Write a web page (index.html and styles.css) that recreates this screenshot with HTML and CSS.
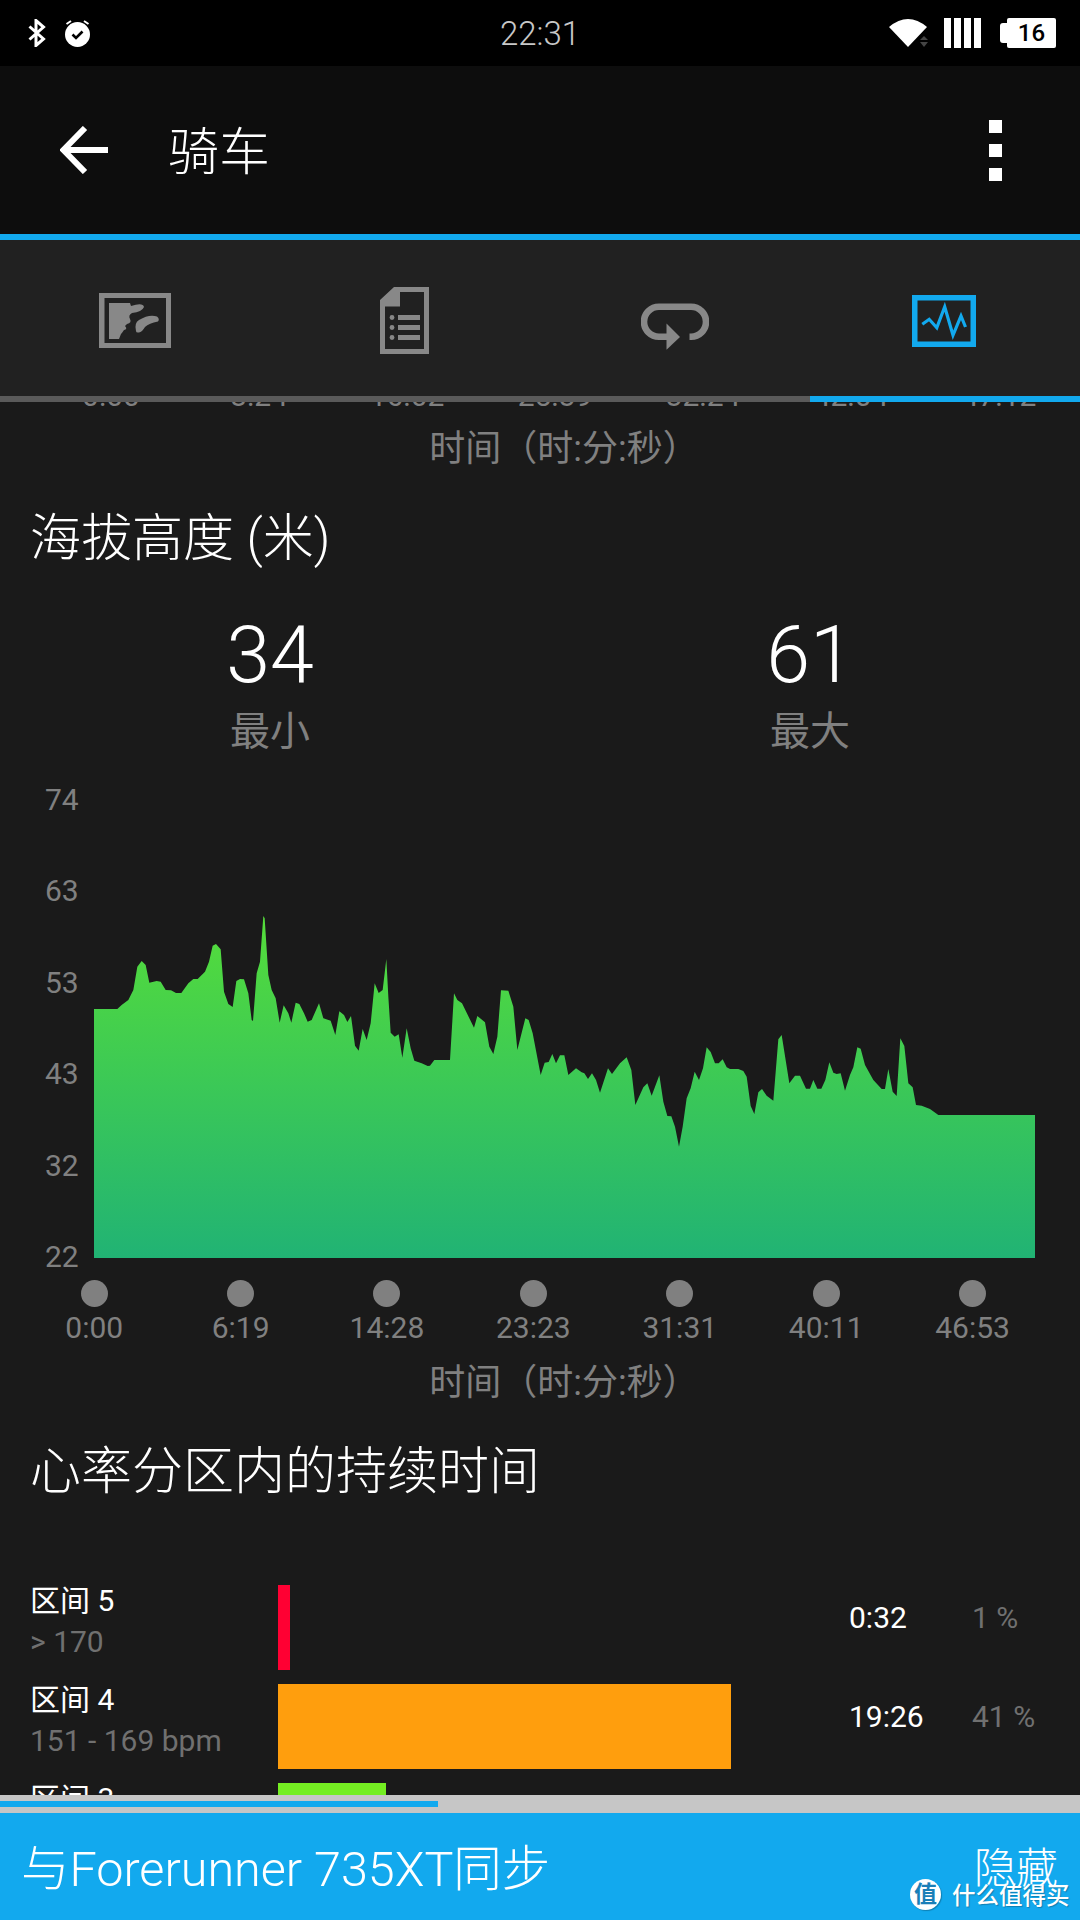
FILE: index.html
```html
<!DOCTYPE html>
<html lang="zh-CN">
<head>
	<meta charset="UTF-8">
	<title>骑车</title>
	<link rel="stylesheet" href="styles.css">
</head>
<body>
	<div id="page">
		<div class="status">
			<div class="status-left">
				<svg class="ico-bt" viewBox="0 0 18 28"><path d="M1.5 7.5 L15.5 20 L8 26.5 V1.5 L15.5 8 L1.5 20.5"/></svg>
				<svg class="ico-alarm" viewBox="0 0 25 28">
					<circle cx="12.5" cy="15.5" r="12.5"/>
					<path class="bell" d="M1.5 5 L6 2 M23.5 5 L19 2"/>
					<path class="tick" d="M7.5 15.5 L11 19 L17.5 12.5"/>
				</svg>
			</div>
			<div class="status-time">22:31</div>
			<div class="status-right">
				<svg class="ico-wifi" viewBox="0 0 40 28">
					<path d="M0 8 Q19 -8 38 8 L19 28 Z"/>
					<path class="updown" d="M35 17 L39 21 H31 Z M31 23 H39 L35 28 Z"/>
				</svg>
				<div class="signal"><span></span><span></span><span></span><span></span></div>
				<div class="battery"><div class="nub"></div><div class="cell">16</div></div>
			</div>
		</div>

		<div class="appbar">
			<svg class="ico-back" viewBox="0 0 48 48"><path d="M48 24 H4 M25 2 L3.5 24 L25 46"/></svg>
			<div class="title">骑车</div>
			<div class="menu"><span></span><span></span><span></span></div>
		</div>

		<div class="tabs">
			<div class="tab">
				<svg class="ico-map" viewBox="0 0 72 55">
					<path fill-rule="evenodd" d="M0 0 H72 V55 H0 Z M5.5 5 V50 H67 V5 Z"/>
					<path d="M10 10 H31 L32 13 Q44 9 45 14 Q43 19 33 20 Q29 22 31 26 Q33 30 28 31 L26 33 Q29 36 25 37 Q23 40 22 41 L20 46 H10 Z"/>
					<path d="M37 38 Q35 30 40 27 Q50 21 58 23.5 Q61 26 59 28.5 Q50 30 46 34 Q43 39 40 39.5 Q37 40 37 38 Z"/>
				</svg>
			</div>
			<div class="tab">
				<svg class="ico-doc" viewBox="0 0 49 67">
					<path fill-rule="evenodd" d="M14 0 H49 V67 H0 V13 Z M20 5 V19.5 H5 V62 H44 V5 Z"/>
					<circle cx="12" cy="30.5" r="2.4"/><circle cx="12" cy="40.5" r="2.4"/><circle cx="12" cy="50.5" r="2.4"/>
					<path d="M18 28 H40 V33 H18 Z M18 38 H40 V43 H18 Z M18 48 H40 V53 H18 Z"/>
				</svg>
			</div>
			<div class="tab">
				<svg class="ico-loop" viewBox="0 -11.5 67.5 58">
					<path class="line" d="M48.5 33.3 H50 A15 15 0 0 0 50 3.3 H18 A15 15 0 0 0 18 33.3 H28"/>
					<path d="M25.5 20 L39 33.5 L25.5 46.3 Z"/>
				</svg>
			</div>
			<div class="tab">
				<svg class="ico-activity" viewBox="0 0 64 52">
					<path class="frame" d="M2.75 2.75 H61.25 V49.25 H2.75 Z"/>
					<path class="pulse" d="M10.3 29.3 L17.2 24.3 L24.8 32.7 L32.7 11.7 L41 40.3 L49 21 L53.5 32"/>
				</svg>
			</div>
		</div>
		<div class="tab-line"><div class="tab-on"></div></div>

		<div class="content">
			<div class="cut-axis">
				<span>0:00</span><span>8:24</span><span>16:02</span><span>25:39</span><span>32:24</span><span>42:04</span><span>47:12</span>
			</div>
			<div class="caption cap-top">时间（时:分:秒）</div>
			<h2 class="heading head-alt">海拔高度 (米)</h2>

			<div class="stats">
				<div class="stat"><div class="stat-val">34</div><div class="stat-lbl">最小</div></div>
				<div class="stat"><div class="stat-val">61</div><div class="stat-lbl">最大</div></div>
			</div>

			<div class="chart">
				<div class="y-axis">
					<span>74</span><span>63</span><span>53</span><span>43</span><span>32</span><span>22</span>
				</div>
				<svg class="plot" viewBox="102 0 2823 1134">
					<defs>
						<linearGradient id="alt" gradientUnits="userSpaceOnUse" x1="0" y1="108" x2="0" y2="1134">
							<stop offset="0" stop-color="#55dd3a"/>
							<stop offset="1" stop-color="#21b374"/>
						</linearGradient>
					</defs>
					<polygon fill="url(#alt)" points="102,387 172,387 185,375 205,360 220,330 232,260 245,243 257,255 268,308 290,303 302,305 317,330 333,331 348,339 364,339 385,310 400,297 413,297 435,275 447,245 458,197 468,192 482,208 492,335 505,372 518,381 529,303 540,297 552,298 565,340 575,420 579,423 590,280 600,245 610,108 614,115 625,285 635,330 647,355 659,428 671,376 685,400 694,428 707,368 718,372 732,400 743,425 755,420 777,370 790,415 812,422 826,465 838,394 852,405 862,426 873,408 885,497 896,512 908,447 920,480 932,430 944,310 956,339 968,330 979,237 985,350 992,458 1004,470 1016,463 1027,533 1040,445 1052,505 1063,542 1085,550 1103,558 1110,557 1123,540 1170,540 1182,340 1192,360 1206,370 1242,443 1252,408 1275,427 1288,500 1300,522 1312,470 1323,331 1345,332 1360,380 1372,510 1396,415 1406,420 1418,460 1442,585 1454,548 1466,546 1477,522 1488,550 1500,526 1513,526 1525,585 1548,565 1565,577 1573,580 1584,597 1596,580 1608,600 1620,638 1644,565 1656,582 1680,550 1700,532 1714,570 1726,675 1750,622 1762,610 1775,647 1798,586 1810,665 1822,708 1834,709 1845,740 1857,800 1868,740 1880,655 1892,625 1904,575 1917,600 1929,565 1940,502 1952,516 1965,550 1976,550 1988,538 2000,562 2010,567 2035,567 2050,573 2060,590 2072,678 2083,702 2095,637 2106,627 2120,647 2140,662 2155,478 2165,465 2188,610 2205,587 2220,587 2238,626 2250,626 2260,600 2272,626 2284,626 2296,600 2308,547 2320,578 2330,582 2342,580 2355,632 2370,585 2380,562 2392,502 2402,506 2415,555 2440,600 2465,627 2475,627 2485,567 2498,635 2510,648 2521,475 2533,498 2545,610 2558,622 2568,675 2585,677 2610,687 2635,705 2925,705 2925,1134 102,1134"/>
				</svg>
			</div>

			<div class="x-axis">
				<div class="tick-col"><i></i><span>0:00</span></div>
				<div class="tick-col"><i></i><span>6:19</span></div>
				<div class="tick-col"><i></i><span>14:28</span></div>
				<div class="tick-col"><i></i><span>23:23</span></div>
				<div class="tick-col"><i></i><span>31:31</span></div>
				<div class="tick-col"><i></i><span>40:11</span></div>
				<div class="tick-col"><i></i><span>46:53</span></div>
			</div>
			<div class="caption cap-bottom">时间（时:分:秒）</div>
			<h2 class="heading head-hr">心率分区内的持续时间</h2>

			<div class="zones">
				<div class="zone">
					<div class="zone-name"><div>区间 5</div><div class="dim">&gt; 170</div></div>
					<div class="zone-track"><div class="bar bar-red"></div></div>
					<div class="zone-time">0:32</div>
					<div class="zone-pct">1 %</div>
				</div>
				<div class="zone">
					<div class="zone-name"><div>区间 4</div><div class="dim">151 - 169 bpm</div></div>
					<div class="zone-track"><div class="bar bar-orange"></div></div>
					<div class="zone-time">19:26</div>
					<div class="zone-pct">41 %</div>
				</div>
				<div class="zone">
					<div class="zone-name"><div>区间 3</div></div>
					<div class="zone-track"><div class="bar bar-green"></div></div>
				</div>
			</div>
		</div>

		<div class="sync-track"><div class="sync-fill"></div></div>
		<div class="sync">
			<div class="sync-text">与Forerunner 735XT同步</div>
			<div class="sync-hide">隐藏</div>
		</div>

		<div class="mark">
			<div class="mark-logo">值</div>
			<div class="mark-text">什么值得买</div>
		</div>
	</div>
</body>
</html>
```

FILE: styles.css
```css
* {
	margin: 0;
	padding: 0;
	box-sizing: border-box;
}
body {
	background: #1a1a1a;
	font-family: Roboto, "Noto Sans CJK SC", sans-serif;
}
#page {
	position: relative;
	width: 1080px;
	height: 1920px;
	display: flex;
	flex-direction: column;
	overflow: hidden;
	background: #1a1a1a;
}

/* status bar */
.status {
	height: 66px;
	flex: none;
	background: #000;
	display: grid;
	grid-template-columns: 1fr auto 1fr;
	align-items: center;
	padding: 0 24px;
}
.status-left {
	display: flex;
	gap: 19px;
	padding-left: 4px;
}
.ico-bt {
	width: 18px;
	height: 28px;
	fill: none;
	stroke: #fff;
	stroke-width: 3;
}
.ico-alarm {
	width: 25px;
	height: 28px;
	fill: #fff;
}
.ico-alarm .bell {
	fill: none;
	stroke: #fff;
	stroke-width: 2;
}
.ico-alarm .tick {
	fill: none;
	stroke: #000;
	stroke-width: 2.6;
}
.status-time {
	font-size: 33px;
	font-weight: 300;
	color: #c8c8c8;
}
.status-right {
	display: flex;
	justify-content: flex-end;
	align-items: center;
	gap: 15px;
}
.ico-wifi {
	width: 40px;
	height: 28px;
	fill: #fff;
}
.ico-wifi .updown {
	fill: #444;
}
.signal {
	display: flex;
	gap: 3px;
	height: 30px;
}
.signal span {
	width: 7px;
	background: #fff;
}
.battery {
	display: flex;
	align-items: center;
	margin-left: 4px;
}
.nub {
	width: 7px;
	height: 20px;
	background: #fff;
	border-radius: 3px 0 0 3px;
}
.cell {
	width: 49px;
	height: 30px;
	background: #fff;
	border-radius: 2px;
	color: #000;
	font-size: 24px;
	font-weight: 500;
	line-height: 30px;
	text-align: center;
}

/* app bar */
.appbar {
	height: 168px;
	flex: none;
	background: #0d0d0d;
	display: flex;
	align-items: center;
	padding: 0 78px 0 60px;
}
.ico-back {
	width: 48px;
	height: 48px;
	fill: none;
	stroke: #fff;
	stroke-width: 6;
}
.title {
	flex: 1;
	margin-left: 60px;
	margin-bottom: 4px;
	font-size: 51px;
	font-weight: 300;
	color: #fff;
}
.menu {
	display: flex;
	flex-direction: column;
	gap: 11px;
}
.menu span {
	width: 13px;
	height: 13px;
	background: #fff;
}

/* tabs */
.tabs {
	height: 162px;
	flex: none;
	border-top: 6px solid #12a9ee;
	background: #212121;
	display: grid;
	grid-template-columns: repeat(4, 1fr);
	padding-top: 5px;
}
.tab {
	display: flex;
	align-items: center;
	justify-content: center;
}
.tab svg {
	fill: #888;
}
.ico-map {
	width: 72px;
	height: 55px;
}
.ico-doc {
	width: 49px;
	height: 67px;
	margin-right: 2px;
}
.ico-loop {
	width: 67.5px;
	height: 58px;
}
.ico-loop .line {
	fill: none;
	stroke: #888;
	stroke-width: 6.6;
}
.ico-activity {
	width: 64px;
	height: 52px;
	margin-right: 2px;
}
.ico-activity .frame {
	fill: none;
	stroke: #12a9ee;
	stroke-width: 5.5;
}
.ico-activity .pulse {
	fill: none;
	stroke: #12a9ee;
	stroke-width: 3.2;
}
.tab-line {
	height: 6px;
	flex: none;
	background: #5a5a5a;
	display: flex;
	justify-content: flex-end;
}
.tab-on {
	width: 270px;
	background: #12a9ee;
}

/* scrolled content */
.content {
	flex: 1;
	overflow: hidden;
}
.cut-axis {
	height: 9px;
	padding-left: 37px;
	display: flex;
	align-items: flex-end;
	overflow: hidden;
}
.cut-axis span {
	width: 148px;
	flex: none;
	text-align: center;
	font-size: 30px;
	line-height: 30px;
	color: #808080;
}
.caption {
	text-align: center;
	font-size: 36px;
	line-height: 40px;
	color: #808080;
	padding-left: 48px;
}
.cap-top {
	margin-top: 18px;
}
.cap-bottom {
	margin-top: 17px;
}
.heading {
	padding-left: 30px;
	font-size: 51px;
	font-weight: 300;
	line-height: 60px;
	color: #fff;
}
.head-alt {
	margin-top: 40px;
}
.head-hr {
	margin-top: 39px;
}
.stats {
	margin-top: 46px;
	display: grid;
	grid-template-columns: 1fr 1fr;
	text-align: center;
}
.stat-val {
	font-size: 79px;
	font-weight: 300;
	line-height: 80px;
	color: #fff;
}
.stat-lbl {
	margin-top: 15px;
	font-size: 40px;
	line-height: 44px;
	color: #808080;
}
.chart {
	margin-top: 31px;
	height: 487px;
	display: flex;
	padding-right: 45px;
}
.y-axis {
	width: 94px;
	flex: none;
	padding-left: 45px;
	display: flex;
	flex-direction: column;
	justify-content: space-between;
	font-size: 30px;
	line-height: 30px;
	color: #808080;
}
.plot {
	width: 941px;
	height: 378px;
	align-self: flex-end;
	margin-bottom: 14px;
}
.x-axis {
	margin-top: 8px;
	padding-left: 21px;
	display: flex;
}
.tick-col {
	width: 146.4px;
	flex: none;
	display: flex;
	flex-direction: column;
	align-items: center;
	gap: 3px;
	font-size: 30px;
	line-height: 36px;
	color: #808080;
}
.tick-col i {
	width: 27px;
	height: 27px;
	border-radius: 50%;
	background: #808080;
}

/* heart rate zones */
.zones {
	margin-top: 83px;
	padding-left: 30px;
}
.zone {
	height: 85px;
	margin-bottom: 14px;
	display: grid;
	grid-template-columns: 248px 571px 123px 1fr;
}
.zone-name {
	margin-top: -5px;
	font-size: 30px;
	line-height: 41px;
	color: #fff;
}
.dim {
	color: #707070;
}
.bar {
	height: 85px;
}
.bar-red {
	width: 12px;
	background: #ff0033;
}
.bar-orange {
	width: 453px;
	background: #ff9e0d;
}
.bar-green {
	width: 108px;
	background: #74ee22;
}
.zone-time {
	margin-top: 13px;
	font-size: 30px;
	line-height: 40px;
	color: #fff;
}
.zone-pct {
	margin-top: 13px;
	font-size: 30px;
	line-height: 40px;
	color: #707070;
}

/* sync panel */
.sync-track {
	height: 18px;
	flex: none;
	background: #c6c6c6;
	padding-top: 6px;
}
.sync-fill {
	width: 438px;
	height: 6px;
	background: #12a9ee;
}
.sync {
	height: 107px;
	flex: none;
	background: #12a9ee;
	display: flex;
	align-items: center;
	justify-content: space-between;
	padding: 0 22px 4px 21px;
	color: #fff;
	font-size: 48.5px;
	font-weight: 300;
}
.sync-hide {
	font-size: 42px;
}

/* watermark lies over the panel */
.mark {
	position: absolute;
	left: 910px;
	top: 1877px;
	display: flex;
	align-items: center;
	gap: 11px;
}
.mark-logo {
	width: 31px;
	height: 31px;
	border-radius: 50%;
	background: #fff;
	color: #1a7fb8;
	font-size: 23px;
	font-weight: 700;
	line-height: 31px;
	text-align: center;
	box-shadow: 1px 1px 1px rgba(0, 0, 0, .25);
}
.mark-text {
	font-size: 23.5px;
	font-weight: 500;
	color: #fff;
	white-space: nowrap;
	text-shadow: 1px 1px 1px rgba(0, 0, 0, .25);
}
```
